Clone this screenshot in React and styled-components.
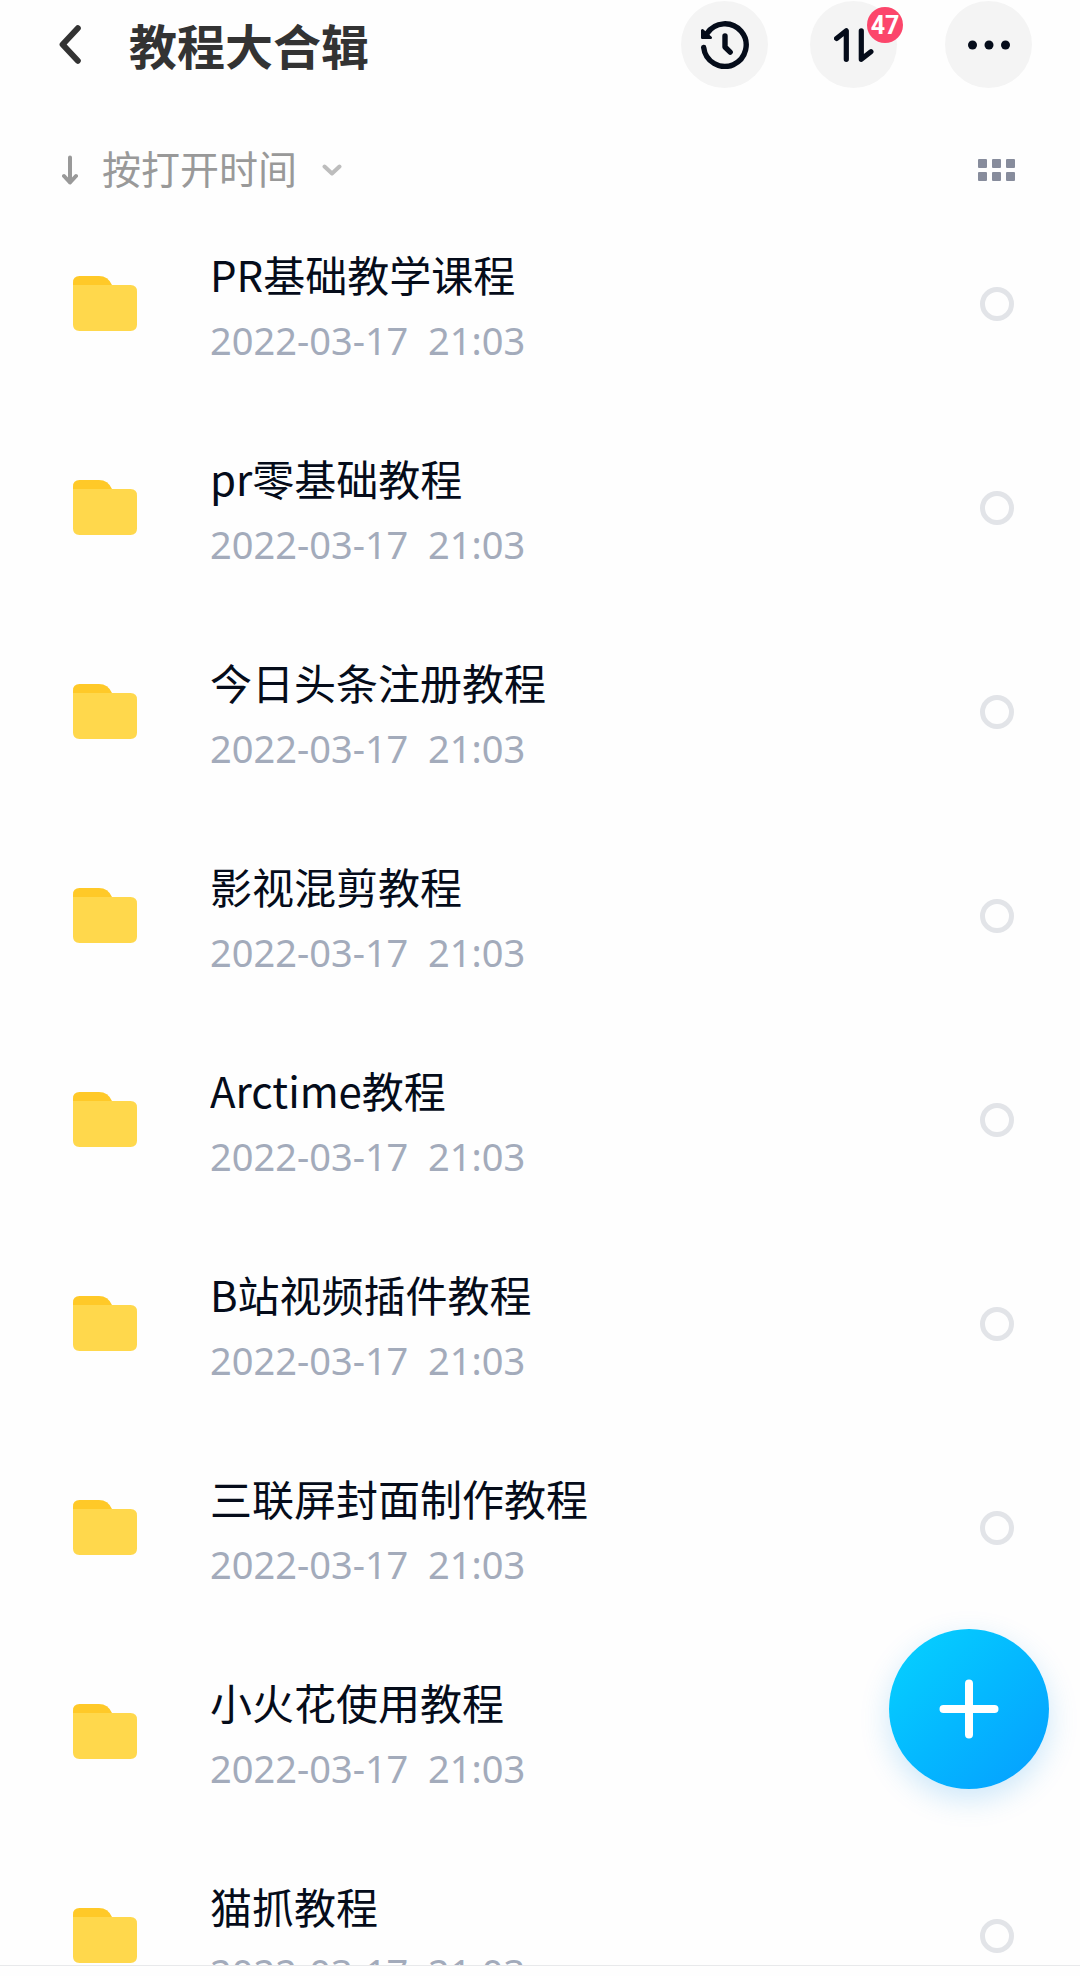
import React, { useState } from "react";
import styled, { createGlobalStyle } from "styled-components";

const GlobalStyle = createGlobalStyle`
  * {
    box-sizing: border-box;
  }
  body {
    margin: 0;
    background: #fefefe;
    font-family: "Noto Sans CJK SC", "Noto Sans", sans-serif;
  }
  button,
  select {
    padding: 0;
    border: 0;
    background: none;
    color: inherit;
    font: inherit;
    cursor: pointer;
  }
  svg {
    display: block;
  }
`;

const Page = styled.div`
  display: flex;
  flex-direction: column;
  height: 100vh;
`;

const Header = styled.header`
  display: flex;
  align-items: center;
  gap: 48px;
  padding: 1px 48px 0 59px;
  color: #333;
`;

const Title = styled.h1`
  flex: 1;
  margin: 0;
  padding-bottom: 2px;
  font-size: 48px;
  font-weight: 700;
  line-height: 72px;
`;

const Actions = styled.div`
  display: flex;
  gap: 42px;
`;

const RoundButton = styled.button`
  position: relative;
  display: flex;
  align-items: center;
  justify-content: center;
  width: 87px;
  height: 87px;
  border-radius: 50%;
  background: #f4f4f4;
  color: #050c1a;
`;

const Badge = styled.span`
  position: absolute;
  top: 6px;
  right: -6px;
  width: 36px;
  height: 36px;
  border-radius: 50%;
  background: #fc466b;
  color: #fff;
  font-family: Roboto, sans-serif;
  font-size: 25px;
  font-weight: 700;
  line-height: 38px;
  text-align: center;
`;

const SortBar = styled.div`
  display: flex;
  align-items: center;
  justify-content: space-between;
  height: 64px;
  margin-top: 50px;
  padding: 0 65px 0 62px;
`;

const SortField = styled.div`
  display: flex;
  align-items: center;
  gap: 24px;
  color: #999;
`;

const SortSelect = styled.select`
  appearance: none;
  padding-bottom: 6px;
  font-size: 39px;
  line-height: 58px;
`;

const List = styled.ul`
  flex: 1;
  min-height: 0;
  margin: 0;
  padding: 0;
  overflow-y: auto;
  list-style: none;
  scrollbar-width: none;
`;

const Row = styled.li`
  display: flex;
  align-items: center;
  gap: 73px;
  height: 204px;
  padding: 0 66px 0 73px;
`;

const FileInfo = styled.label`
  flex: 1;
  min-width: 0;
  padding-top: 6px;
  line-height: 66px;
`;

const FileName = styled.div`
  overflow: hidden;
  color: #050c1a;
  font-size: 42px;
  text-overflow: ellipsis;
  white-space: nowrap;
`;

const FileTime = styled.div`
  color: #a3abbb;
  font-family: "Noto Sans", sans-serif;
  font-size: 38px;
  white-space: pre;
`;

const Check = styled.input`
  appearance: none;
  width: 34px;
  height: 34px;
  margin: 0;
  border: 5px solid #e2e4e8;
  border-radius: 50%;
  cursor: pointer;
  &:checked {
    border-color: #06a7ff;
    background: #06a7ff;
  }
`;

const AddButton = styled.button`
  position: fixed;
  right: 31px;
  bottom: 187px;
  display: flex;
  align-items: center;
  justify-content: center;
  width: 160px;
  height: 160px;
  border-radius: 50%;
  background: linear-gradient(135deg, #06d0ff 5%, #04b8ff 50%, #06a0ff 95%);
  box-shadow: 0 10px 30px rgba(6, 140, 230, 0.2);
`;

const BottomEdge = styled.footer`
  height: 11px;
  border-top: 1px solid #e8e9eb;
`;

const FILES = [
  { name: "PR基础教学课程", time: "2022-03-17  21:03" },
  { name: "pr零基础教程", time: "2022-03-17  21:03" },
  { name: "今日头条注册教程", time: "2022-03-17  21:03" },
  { name: "影视混剪教程", time: "2022-03-17  21:03" },
  { name: "Arctime教程", time: "2022-03-17  21:03" },
  { name: "B站视频插件教程", time: "2022-03-17  21:03" },
  { name: "三联屏封面制作教程", time: "2022-03-17  21:03" },
  { name: "小火花使用教程", time: "2022-03-17  21:03" },
  { name: "猫抓教程", time: "2022-03-17  21:03" },
];

const stroke = {
  fill: "none",
  stroke: "currentColor",
  strokeLinecap: "round",
  strokeLinejoin: "round",
};

const BackIcon = () => (
  <svg width="22" height="39" viewBox="0 0 22 39" {...stroke} strokeWidth="6">
    <path d="M18.8 3.2 3.6 19.5l15.200 16.300" />
  </svg>
);

const HistoryIcon = () => (
  <svg width="48" height="48" viewBox="0 0 48 48" {...stroke} strokeWidth="5.4">
    <path d="M2.700 26.500A21.300 21.300 0 1 0 6 12.500" />
    <path d="M24 15V26l5.200 5.200" />
    <path d="M1.300 9.300v7.500h8.400z" fill="currentColor" strokeWidth="2.600" />
  </svg>
);

const TransferIcon = () => (
  <svg width="40" height="34" viewBox="0 0 40 34" {...stroke} strokeWidth="5.2">
    <path d="M2.6 10.500 12.300 2.800v28.500" />
    <path d="M27.300 2.800v28.500l9.600-7.600" />
  </svg>
);

const MoreIcon = () => (
  <svg width="42" height="10" viewBox="0 0 42 10" fill="currentColor">
    <circle cx="4.5" cy="5" r="4.5" />
    <circle cx="21" cy="5" r="4.5" />
    <circle cx="37.5" cy="5" r="4.5" />
  </svg>
);

const SortArrow = () => (
  <svg width="16" height="30" viewBox="0 0 16 30" {...stroke} strokeWidth="4">
    <path d="M8 2.500v25M2 21 8 27.500l6-6.500" />
  </svg>
);

const ChevronIcon = () => (
  <svg width="20" height="12" viewBox="0 0 20 12" {...stroke} strokeWidth="4">
    <path d="M2.500 2.500 10 9.500l7.500-7" stroke="#bdbdbd" />
  </svg>
);

const GridIcon = () => (
  <svg width="37" height="22" viewBox="0 0 37 22" fill="#878c9c">
    {[0, 14, 28].map((x) =>
      [0, 13].map((y) => (
        <rect key={`${x}-${y}`} x={x} y={y} width="9" height="9" rx="1" />
      ))
    )}
  </svg>
);

const FolderIcon = () => (
  <svg width="64" height="56" viewBox="0 0 64 56">
    <path d="M0 12V6.500Q0 0 6.500 0H26q9 0 13 9v5H0z" fill="#ffc928" />
    <path d="M0 9h57.500Q64 9 64 15.500v33Q64 55 57.500 55h-51Q0 55 0 48.500z" fill="#ffd84c" />
  </svg>
);

const PlusIcon = () => (
  <svg width="60" height="60" viewBox="0 0 60 60" {...stroke} stroke="#fff" strokeWidth="8">
    <path d="M30 4.500v51M4.500 30h51" />
  </svg>
);

const App = () => {
  const [selected, setSelected] = useState([]);

  function handleToggle(name) {
    setSelected((list) =>
      list.includes(name) ? list.filter((v) => v !== name) : [...list, name]
    );
  }

  return (
    <Page>
      <GlobalStyle />
      <Header>
        <button type="button" aria-label="返回">
          <BackIcon />
        </button>
        <Title>教程大合辑</Title>
        <Actions>
          <RoundButton type="button" aria-label="历史记录">
            <HistoryIcon />
          </RoundButton>
          <RoundButton type="button" aria-label="传输列表">
            <TransferIcon />
            <Badge>47</Badge>
          </RoundButton>
        </Actions>
        <RoundButton type="button" aria-label="更多">
          <MoreIcon />
        </RoundButton>
      </Header>

      <SortBar>
        <SortField>
          <SortArrow />
          <SortSelect aria-label="排序方式">
            <option>按打开时间</option>
          </SortSelect>
          <ChevronIcon />
        </SortField>
        <button type="button" aria-label="宫格视图">
          <GridIcon />
        </button>
      </SortBar>

      <List>
        {FILES.map((file, i) => (
          <Row key={file.name}>
            <FolderIcon />
            <FileInfo htmlFor={`file-${i}`}>
              <FileName>{file.name}</FileName>
              <FileTime>{file.time}</FileTime>
            </FileInfo>
            <Check
              type="checkbox"
              id={`file-${i}`}
              checked={selected.includes(file.name)}
              onChange={() => handleToggle(file.name)}
            />
          </Row>
        ))}
      </List>

      <AddButton type="button" aria-label="新建">
        <PlusIcon />
      </AddButton>
      <BottomEdge />
    </Page>
  );
};

export default App;
